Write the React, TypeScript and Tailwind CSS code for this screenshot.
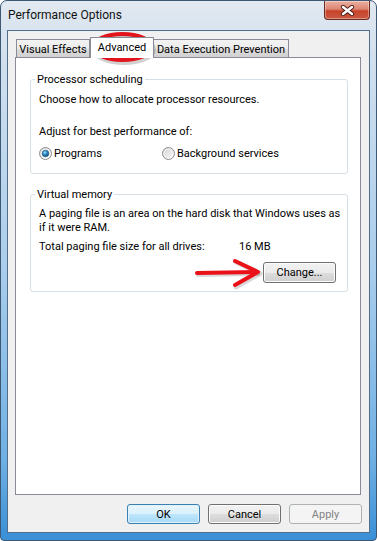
import React from "react";

function Radio({ checked }: { checked: boolean }) {
  return (
    <svg width="13" height="13" viewBox="0 0 13 13" className="shrink-0">
      <defs>
        <linearGradient id={checked ? "rg1" : "rg0"} x1="0" y1="0" x2="1" y2="1">
          <stop offset="0" stopColor="#d2d2d2" />
          <stop offset="1" stopColor="#fbfbfb" />
        </linearGradient>
        <radialGradient id="dot" cx="0.4" cy="0.35" r="0.7">
          <stop offset="0" stopColor="#9fe0fb" />
          <stop offset="0.45" stopColor="#2c8ac8" />
          <stop offset="1" stopColor="#0b3f6f" />
        </radialGradient>
      </defs>
      <circle cx="6.5" cy="6.5" r="6" fill={`url(#${checked ? "rg1" : "rg0"})`} stroke="#8d8f90" strokeWidth="1" />
      <circle cx="6.5" cy="6.5" r="4.5" fill="none" stroke="#ffffff" strokeOpacity="0.6" strokeWidth="1" />
      {checked && <circle cx="6.5" cy="6.5" r="3.3" fill="url(#dot)" stroke="#25577f" strokeWidth="0.6" />}
    </svg>
  );
}

export default function App() {
  return (
    <div className="relative w-[377px] h-[541px] overflow-hidden bg-white [font-family:Roboto,'Noto_Sans',sans-serif] text-[11px] text-black">
      {/* window frame */}
      <div className="flex h-full w-full flex-col rounded-t-[7px] rounded-b-[4px] border border-[#3e5873] bg-[linear-gradient(180deg,#e1e9f1_0%,#d2e0ee_10%,#a9cdec_50%,#6fb0e4_85%,#3a8fd6_100%)] px-[6px] pb-[7px]">
        {/* title bar */}
        <div className="flex h-[29px] items-start justify-between">
          <div className="pl-[1px] pt-[6px] text-[12px] leading-[16px] text-[#111]">Performance Options</div>
          <div className="flex h-[19px] w-[46px] items-center justify-center rounded-b-[4px] border border-t-0 border-[#6d2a20] bg-[linear-gradient(180deg,#eab0a2_0%,#dc8673_45%,#c8432b_55%,#c95a40_100%)] shadow-[inset_0_0_0_1px_rgba(255,255,255,0.35)]">
            <svg width="15" height="11" viewBox="0 0 15 11">
              <path d="M3 2 L12 9 M12 2 L3 9" stroke="#4a1a14" strokeWidth="4.2" strokeLinecap="round" />
              <path d="M3 2 L12 9 M12 2 L3 9" stroke="#ffffff" strokeWidth="2.4" strokeLinecap="round" />
            </svg>
          </div>
        </div>

        {/* client area */}
        <div className="flex flex-1 flex-col border border-[#506d8a] bg-[#f0f0f0]">
          {/* tabs */}
          <div className="flex h-[27px] items-end pl-[8px] pt-[6px]">
            <div className="flex h-[19px] w-[74px] items-center justify-center whitespace-nowrap border border-b-0 border-[#898c95] bg-[linear-gradient(180deg,#f3f3f3_0%,#ebebeb_50%,#dddddd_51%,#cfcfcf_100%)] leading-[15px]">
              Visual Effects
            </div>
            <div className="relative z-10 flex h-[21px] w-[64px] items-start justify-center whitespace-nowrap border border-b-0 border-[#898c95] bg-white pt-[2px] leading-[15px]">
              Advanced
            </div>
            <div className="flex h-[19px] w-[135px] items-center justify-center whitespace-nowrap border border-b-0 border-l-0 border-[#898c95] bg-[linear-gradient(180deg,#f3f3f3_0%,#ebebeb_50%,#dddddd_51%,#cfcfcf_100%)] leading-[15px]">
              Data Execution Prevention
            </div>
          </div>

          {/* panel */}
          <div className="-mt-px ml-[7px] mr-[8px] flex flex-1 flex-col border border-[#898c95] bg-white pl-[14px] pr-[12px] pt-[14px] leading-[15px]">
            <fieldset className="min-w-0 rounded-[3px] border border-[#d5dfe5] pb-[12px] pl-[8px] pr-[8px]">
              <legend className="-ml-[4px] px-[2px] leading-[15px]">Processor scheduling</legend>
              <div className="mt-[5px]">Choose how to allocate processor resources.</div>
              <div className="mt-[17px]">Adjust for best performance of:</div>
              <div className="mt-[7px] flex items-center">
                <div className="flex w-[123px] items-center gap-[2px]">
                  <Radio checked />
                  <span>Programs</span>
                </div>
                <div className="flex items-center gap-[2px]">
                  <Radio checked={false} />
                  <span>Background services</span>
                </div>
              </div>
            </fieldset>

            <fieldset className="mt-[13px] min-w-0 rounded-[3px] border border-[#d5dfe5] pb-[8px] pl-[8px] pr-[11px]">
              <legend className="-ml-[4px] px-[2px] leading-[15px]">Virtual memory</legend>
              <div className="mt-[5px] whitespace-nowrap leading-[14px]">
                A paging file is an area on the hard disk that Windows uses as
                <br />
                if it were RAM.
              </div>
              <div className="mt-[4px] flex">
                <div className="w-[200px] whitespace-nowrap">Total paging file size for all drives:</div>
                <div>16 MB</div>
              </div>
              <div className="mt-[8px] flex justify-end">
                <button className="h-[21px] w-[73px] rounded-[3px] border border-[#707070] bg-[linear-gradient(180deg,#f2f2f2_0%,#ebebeb_50%,#dddddd_51%,#cfcfcf_100%)] leading-[15px] shadow-[inset_0_0_0_1px_#fcfcfc]">
                  Change...
                </button>
              </div>
            </fieldset>
          </div>

          {/* bottom buttons */}
          <div className="flex justify-end gap-[8px] pb-[8px] pr-[7px] pt-[9px]">
            <button className="h-[20px] w-[73px] rounded-[3px] border border-[#3c7fb1] bg-[linear-gradient(180deg,#eaf6fd_0%,#d9f0fc_50%,#bee6fd_51%,#a7d9f5_100%)] leading-[15px] shadow-[inset_0_0_0_1px_#dff2fd]">
              OK
            </button>
            <button className="h-[20px] w-[73px] rounded-[3px] border border-[#707070] bg-[linear-gradient(180deg,#f2f2f2_0%,#ebebeb_50%,#dddddd_51%,#cfcfcf_100%)] leading-[15px] shadow-[inset_0_0_0_1px_#fcfcfc]">
              Cancel
            </button>
            <button className="h-[20px] w-[73px] rounded-[3px] border border-[#adb2b5] bg-[#f4f4f4] leading-[15px] text-[#838383]">
              Apply
            </button>
          </div>
        </div>
      </div>

      {/* red ellipse annotation around the Advanced tab */}
      <svg className="pointer-events-none absolute left-[86px] top-[28px]" width="74" height="40" viewBox="0 0 74 40">
        <ellipse cx="38" cy="21.5" rx="29.5" ry="13" fill="none" stroke="#000" strokeOpacity="0.18" strokeWidth="5" />
        <ellipse cx="36.5" cy="19" rx="29.5" ry="13" fill="none" stroke="#e3141b" strokeWidth="4" />
      </svg>

      {/* red arrow annotation pointing at Change... */}
      <svg className="pointer-events-none absolute left-[192px] top-[255px]" width="72" height="36" viewBox="0 0 72 36">
        <g stroke="#000" strokeOpacity="0.15" strokeWidth="5" fill="none" strokeLinecap="round" strokeLinejoin="round">
          <path d="M6 19.5 L66 18.5" />
          <path d="M44 7 L68 18.5 L44 32" />
        </g>
        <g stroke="#ea1119" strokeWidth="4" fill="none" strokeLinecap="round" strokeLinejoin="round">
          <path d="M5 18 L65 17" />
          <path d="M43 6 L66 17 L43 30" />
        </g>
      </svg>
    </div>
  );
}
